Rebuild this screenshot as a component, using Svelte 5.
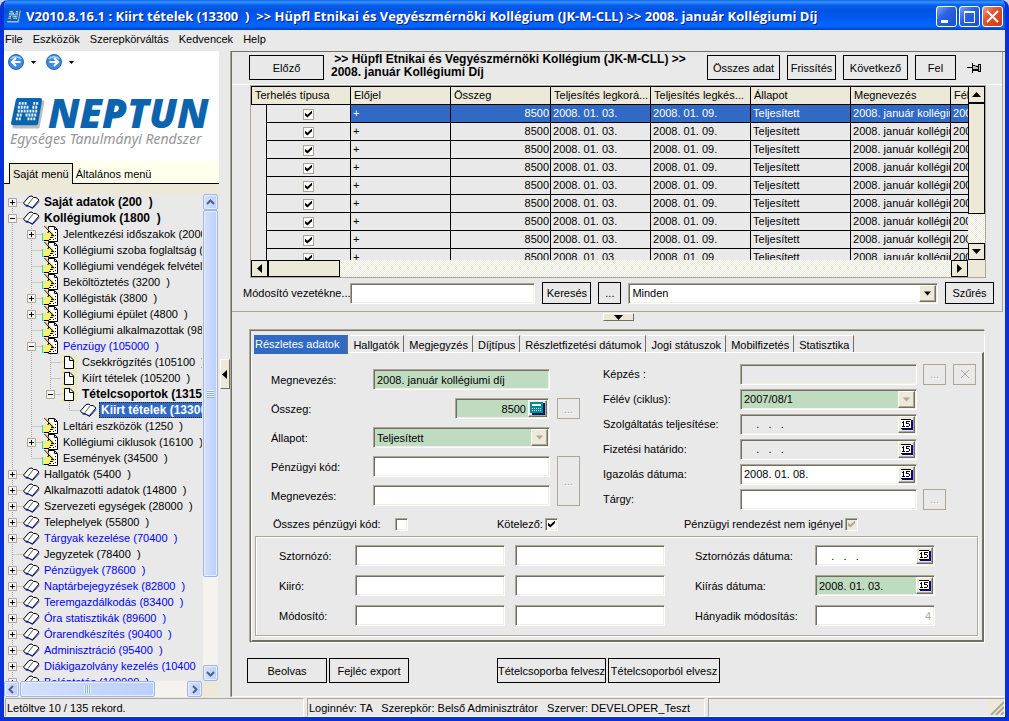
<script lang="ts">
    type Node = {
        level: number;
        label: string;
        icon: "book" | "form" | "page";
        toggle?: "+" | "-";
        tone?: "bold" | "blue" | "selected";
    };

    const menus = ["File", "Eszközök", "Szerepkörváltás", "Kedvencek", "Help"];

    const nodes: Node[] = [
        { level: 0, label: "Saját adatok (200  )", icon: "book", toggle: "+", tone: "bold" },
        { level: 0, label: "Kollégiumok (1800  )", icon: "book", toggle: "-", tone: "bold" },
        { level: 1, label: "Jelentkezési időszakok (2000  )", icon: "form", toggle: "+" },
        { level: 1, label: "Kollégiumi szoba foglaltság (3000  )", icon: "form" },
        { level: 1, label: "Kollégiumi vendégek felvétele (3100  )", icon: "form" },
        { level: 1, label: "Beköltöztetés (3200  )", icon: "form" },
        { level: 1, label: "Kollégisták (3800  )", icon: "form", toggle: "+" },
        { level: 1, label: "Kollégiumi épület (4800  )", icon: "form", toggle: "+" },
        { level: 1, label: "Kollégiumi alkalmazottak (98200  )", icon: "form" },
        { level: 1, label: "Pénzügy (105000  )", icon: "form", toggle: "-", tone: "blue" },
        { level: 2, label: "Csekkrögzítés (105100  )", icon: "page" },
        { level: 2, label: "Kiírt tételek (105200  )", icon: "page" },
        { level: 2, label: "Tételcsoportok (13150  )", icon: "page", toggle: "-", tone: "bold" },
        { level: 3, label: "Kiirt tételek (13300  )", icon: "book", tone: "selected" },
        { level: 1, label: "Leltári eszközök (1250  )", icon: "form" },
        { level: 1, label: "Kollégiumi ciklusok (16100  )", icon: "form", toggle: "+" },
        { level: 1, label: "Események (34500  )", icon: "form" },
        { level: 0, label: "Hallgatók (5400  )", icon: "book", toggle: "+" },
        { level: 0, label: "Alkalmazotti adatok (14800  )", icon: "book", toggle: "+" },
        { level: 0, label: "Szervezeti egységek (28000  )", icon: "book", toggle: "+" },
        { level: 0, label: "Telephelyek (55800  )", icon: "book", toggle: "+" },
        { level: 0, label: "Tárgyak kezelése (70400  )", icon: "book", toggle: "+", tone: "blue" },
        { level: 0, label: "Jegyzetek (78400  )", icon: "book" },
        { level: 0, label: "Pénzügyek (78600  )", icon: "book", toggle: "+", tone: "blue" },
        { level: 0, label: "Naptárbejegyzések (82800  )", icon: "book", toggle: "+", tone: "blue" },
        { level: 0, label: "Teremgazdálkodás (83400  )", icon: "book", toggle: "+", tone: "blue" },
        { level: 0, label: "Óra statisztikák (89600  )", icon: "book", toggle: "+", tone: "blue" },
        { level: 0, label: "Órarendkészítés (90400  )", icon: "book", toggle: "+", tone: "blue" },
        { level: 0, label: "Adminisztráció (95400  )", icon: "book", toggle: "+", tone: "blue" },
        { level: 0, label: "Diákigazolvány kezelés (10400  )", icon: "book", toggle: "+", tone: "blue" },
        { level: 0, label: "Beléptetés (100000  )", icon: "book", toggle: "+", tone: "blue" },
    ];

    const columns = [
        "Előjel",
        "Összeg",
        "Teljesítés legkorá...",
        "Teljesítés legkés...",
        "Állapot",
        "Megnevezés",
        "Félév",
    ];
    const rows = Array.from({ length: 9 }, () => [
        "+",
        "8500",
        "2008. 01. 03.",
        "2008. 01. 09.",
        "Teljesített",
        "2008. január kollégiumi díj",
        "2007/08/1",
    ]);

    const tabs = [
        "Részletes adatok",
        "Hallgatók",
        "Megjegyzés",
        "Díjtípus",
        "Részletfizetési dátumok",
        "Jogi státuszok",
        "Mobilfizetés",
        "Statisztika",
    ];
    let activeTab = $state(0);
    let selectedRow = $state(0);

    const emptyDate = "    .   .   .";

    // does a sibling of the given level follow below row i
    function continues(i: number, level: number) {
        for (let j = i + 1; j < nodes.length; j++) {
            if (nodes[j].level < level) return false;
            if (nodes[j].level === level) return true;
        }
        return level === 0;
    }
</script>

{#snippet chevron(dir: string)}
    <svg class="chevron {dir}" viewBox="0 0 9 9" width="9" height="9">
        <path d="M1 6L4.500 2.500L8 6" fill="none" stroke="#4d6185" stroke-width="2" />
    </svg>
{/snippet}

{#snippet triangle(dir: string)}
    <svg class="triangle {dir}" viewBox="0 0 9 9" width="9" height="9">
        <path d="M0 7L4.500 2L9 7Z" fill="currentColor" />
    </svg>
{/snippet}

{#snippet mark()}
    <svg viewBox="0 0 36 32" class="mark">
        <path d="M10 4H34L29 30H4Z" fill="#b9bcc0" stroke="#b9bcc0" stroke-width="3" stroke-linejoin="round" />
        <path d="M8 2H31L27 26H3Z" fill="#0b64ad" stroke="#0b64ad" stroke-width="4" stroke-linejoin="round" />
        <path
            d="M9 5.500H18M24 5.500H30M8 9.500H20M23 9.500H29M8 13.500H29M7 17.500H13M16 17.500H28M6 21.500H12M18 21.500H27"
            stroke="#e4f1fb" stroke-width="3" stroke-dasharray="2 1" fill="none"
        />
    </svg>
{/snippet}

{#snippet dateField(id: string, value: string, tone: string)}
    <span class="field {tone}">
        <input {id} type="text" {value} />
        <button class="addon" aria-label="Naptár">
            <svg viewBox="0 0 13 13" width="13" height="13">
                <path d="M2 2H13V12H2Z" fill="#00009c" />
                <path d="M1 1H11V11H1Z" fill="#fff" />
                <path d="M1 1H11V2H1ZM1 10H11V11H1Z" fill="#000" />
                <path d="M2 4H3V3H4V8H5V9H2V8H3V5H2ZM6 3H10V4H7V5H9V6H10V8H9V9H6V8H9V6H6Z" fill="#000" />
            </svg>
        </button>
    </span>
{/snippet}

<div class="window">
    <header class="titlebar">
        {@render mark()}
        <h1>V2010.8.16.1 : Kiirt tételek (13300  )  &gt;&gt; Hüpfl Etnikai és Vegyészmérnöki Kollégium (JK-M-CLL) &gt;&gt; 2008. január Kollégiumi Díj</h1>
        <button class="sys" aria-label="Kis méret">
            <svg viewBox="0 0 21 21"><path d="M5 14H12V17H5Z" fill="#fff" /></svg>
        </button>
        <button class="sys" aria-label="Teljes méret">
            <svg viewBox="0 0 21 21"><path d="M5 5.500H16M5.500 5V16.500H15.500V5M5 6.500H16" fill="none" stroke="#fff" /></svg>
        </button>
        <button class="sys close" aria-label="Bezárás">
            <svg viewBox="0 0 21 21"><path d="M5 5L16 16M16 5L5 16" stroke="#fff" stroke-width="2" /></svg>
        </button>
    </header>

    <nav class="menubar">
        {#each menus as menu}
            <button>{menu}</button>
        {/each}
    </nav>

    <div class="main">
        <aside class="sidebar">
            <div class="brand">
                <div class="history">
                    {#each ["back", "forward"] as dir}
                        <button class="round {dir}" aria-label={dir === "back" ? "Vissza" : "Előre"}>
                            <svg viewBox="0 0 16 16" width="16" height="16">
                                <circle cx="8" cy="8" r="7.500" fill="#3f8be0" stroke="#2a62b8" />
                                <path d="M3 5A6 5 0 0 1 13 5" fill="none" stroke="#9cc8f5" stroke-width="2" />
                                <path d="M12.500 8H4.500M8 4L4 8L8 12" fill="none" stroke="#fff" stroke-width="2" />
                            </svg>
                        </button>
                        <button class="drop" aria-label="Előzmények">
                            <svg viewBox="0 0 5 3" width="5" height="3"><path d="M0 0H5L2.500 3Z" /></svg>
                        </button>
                    {/each}
                </div>
                <div class="logo">
                    {@render mark()}
                    <strong>NEPTUN</strong>
                </div>
                <p>Egységes Tanulmányi Rendszer</p>
            </div>

            <div class="side-tabs">
                <button class="on">Saját menü</button>
                <button>Általános menü</button>
            </div>

            <div class="tree-area">
                <ul class="tree">
                    {#each nodes as node, i}
                        <li>
                            {#each { length: node.level } as _, k}
                                <svg class="guide" viewBox="0 0 19 16">
                                    {#if continues(i, k)}<path d="M8.500 0V16" />{/if}
                                </svg>
                            {/each}
                            <svg class="guide" viewBox="0 0 19 16">
                                <path d="M8.500 8.500H19" />
                                {#if i > 0}<path d="M8.500 0V8" />{/if}
                                {#if continues(i, node.level)}<path d="M8.500 8V16" />{/if}
                                {#if node.toggle}
                                    <path class="box" d="M4.500 4.500H12.500V12.500H4.500Z" />
                                    <path class="sign" d="M6 8.500H11" />
                                    {#if node.toggle === "+"}<path class="sign" d="M8.500 6V11" />{/if}
                                {/if}
                            </svg>
                            <svg class="icon" viewBox="0 0 17 16">
                                {#if node.icon === "book"}
                                    <path d="M0.500 9L6 2.500L9 2L10.500 3.500L13 3.500L16 6L9.500 13.500L7 13L5 11.500L2 11Z" fill="#fff" stroke="#000" />
                                    <path d="M10 4L5 10.500" fill="none" stroke="#555" />
                                    <path d="M2.500 12L6.500 12.500L9.500 14.500L16 7.500" fill="none" stroke="#1c1cb0" />
                                {:else if node.icon === "form"}
                                    <path d="M6.500 0.500H12.500L15.500 3.500V15.500H6.500Z" fill="#fff" stroke="#000" />
                                    <path d="M12.500 1V3.500H15M13 6.500H14M13 9.500H14M11 13.500H12M13 12.500H14" fill="none" stroke="#000" />
                                    <path d="M0 7H2V15H0Z" fill="#00e5ee" />
                                    <path d="M1 7H5L7 6H9L12 9V10L10 11L9 13L7 14H1Z" fill="#fff06a" />
                                    <path d="M5.500 7L7 5.500M9 9.500H12M8 11.500H11M7 13.500H9M2 14.500H7" fill="none" stroke="#000" />
                                    <path d="M3 0.500L12 10.500" stroke="#000" stroke-width="1" />
                                    <path d="M4 0.500L12 9" stroke="#f0c000" stroke-width="1" />
                                    <path d="M2 0L4 2" stroke="#d02020" stroke-width="1" />
                                {:else}
                                    <path d="M1 1L16 15M16 1L1 15M0 8H17M8 0V16" stroke="#ffee00" stroke-width="1" />
                                    <path d="M3.500 2.500H9L12.500 6V14.500H3.500Z" fill="#fff" stroke="#000" />
                                    <path d="M8.500 3V6.500H12" fill="none" stroke="#000" />
                                {/if}
                            </svg>
                            <button class="node {node.tone ?? ''}">{node.label}</button>
                        </li>
                    {/each}
                </ul>
                <div class="xp-scroll vertical">
                    <button aria-label="Fel">{@render chevron("up")}</button>
                    <div class="thumb"><i></i></div>
                    <div class="track"></div>
                    <button aria-label="Le">{@render chevron("down")}</button>
                </div>
            </div>
            <div class="hscroll-row">
                <div class="xp-scroll horizontal">
                    <button aria-label="Balra">{@render chevron("left")}</button>
                    <div class="thumb"><i></i></div>
                    <div class="track"></div>
                    <button aria-label="Jobbra">{@render chevron("right")}</button>
                </div>
            </div>
        </aside>

        <div class="splitter">
            <button aria-label="Menü elrejtése">{@render triangle("left")}</button>
        </div>

        <main class="content">
            <section class="upper">
                <div class="toolbar">
                    <button class="flat w75">Előző</button>
                    <h2>&nbsp;&gt;&gt; Hüpfl Etnikai és Vegyészmérnöki Kollégium (JK-M-CLL) &gt;&gt; 2008. január Kollégiumi Díj</h2>
                    <button class="flat w73">Összes adat</button>
                    <button class="flat w49">Frissítés</button>
                    <button class="flat w65">Következő</button>
                    <button class="flat w41">Fel</button>
                    <button class="pin" aria-label="Rögzítés">
                        <svg viewBox="0 0 15 10" width="15" height="10">
                            <path d="M6 2H14V8H6Z" fill="#bbb" />
                            <path d="M0 4.500H5M5.500 0V10M6 2.500H8L9 3.500H11M6 7.500H11M6 6.500H11M11.500 1V9M13.500 1V9M11 1.500H14M11 8.500H14" fill="none" stroke="#000" />
                        </svg>
                    </button>
                </div>

                <div class="grid-box">
                    <div class="viewport">
                        <table>
                            <colgroup>
                                <col class="c-indent" />
                                <col class="c-check" />
                                {#each columns as _}<col class="c-data" />{/each}
                            </colgroup>
                            <thead>
                                <tr>
                                    <th colspan="2">Terhelés típusa</th>
                                    {#each columns as column}<th>{column}</th>{/each}
                                </tr>
                            </thead>
                            <tbody>
                                {#each rows as row, r}
                                    <tr class:selected={r === selectedRow} onclick={() => (selectedRow = r)}>
                                        <td class="plain"></td>
                                        <td class="plain check"><input type="checkbox" class="tick small" checked aria-label="Terhelés" /></td>
                                        {#each row as cell, c}
                                            <td class:num={c === 1}>{cell}</td>
                                        {/each}
                                    </tr>
                                {/each}
                            </tbody>
                        </table>
                    </div>
                    <div class="bar vertical">
                        <button aria-label="Fel">{@render triangle("up")}</button>
                        <div class="thumb"></div>
                        <div class="track"></div>
                        <button aria-label="Le">{@render triangle("down")}</button>
                    </div>
                    <div class="bar horizontal">
                        <button aria-label="Balra">{@render triangle("left")}</button>
                        <div class="thumb"></div>
                        <div class="track"></div>
                        <button aria-label="Jobbra">{@render triangle("right")}</button>
                    </div>
                    <div class="corner"></div>
                </div>

                <div class="search">
                    <label for="search">Módosító vezetékne...</label>
                    <span class="field search-text"><input id="search" type="text" /></span>
                    <button class="flat w49">Keresés</button>
                    <button class="flat w23">...</button>
                    <span class="field search-scope">
                        <select aria-label="Szűrő"><option>Minden</option></select>
                        <span class="addon arrow">{@render triangle("down")}</span>
                    </span>
                    <button class="flat w49">Szűrés</button>
                </div>
            </section>

            <div class="h-splitter">
                <button aria-label="Részletek elrejtése">{@render triangle("down")}</button>
            </div>

            <section class="details">
                <div class="tabs" role="tablist">
                    {#each tabs as tab, i}
                        <button role="tab" aria-selected={i === activeTab} class:active={i === activeTab} onclick={() => (activeTab = i)}>{tab}</button>
                    {/each}
                </div>
                <div class="tab-page">
                    <div class="form">
                        <div class="left-fields">
                            <label for="name">Megnevezés:</label>
                            <span class="field green"><input id="name" type="text" value="2008. január kollégiumi díj" /></span>
                            <span></span>

                            <label for="amount">Összeg:</label>
                            <span class="field green amount">
                                <input id="amount" type="text" value="8500" />
                                <button class="addon" aria-label="Számológép">
                                    <svg viewBox="0 0 15 13" width="15" height="13">
                                        <path d="M2 1H15V13H2Z" fill="#001a5c" />
                                        <path d="M0 0H13V11H0Z" fill="#008c96" />
                                        <path d="M2 2H11V4H2Z" fill="#fff" />
                                        <path d="M2 6.500H12M2 8.500H12" stroke="#c5f5f5" stroke-dasharray="1 1" />
                                    </svg>
                                </button>
                            </span>
                            <button class="more" disabled>...</button>

                            <label for="state">Állapot:</label>
                            <span class="field green">
                                <select id="state"><option>Teljesített</option></select>
                                <span class="addon arrow dim">{@render triangle("down")}</span>
                            </span>
                            <span></span>

                            <label for="code">Pénzügyi kód:</label>
                            <span class="field"><input id="code" type="text" /></span>
                            <button class="more tall" disabled>...</button>

                            <label for="code-name">Megnevezés:</label>
                            <span class="field"><input id="code-name" type="text" /></span>
                        </div>

                        <div class="right-fields">
                            <label for="training">Képzés :</label>
                            <span class="field gray"><input id="training" type="text" /></span>
                            <button class="more" disabled>...</button>
                            <button class="more" disabled aria-label="Törlés">
                                <svg viewBox="0 0 10 10" width="10" height="10"><path d="M1 1L9 9M9 1L1 9" stroke="#aca899" /></svg>
                            </button>

                            <label for="term">Félév (ciklus):</label>
                            <span class="field green">
                                <select id="term"><option>2007/08/1</option></select>
                                <span class="addon arrow dim">{@render triangle("down")}</span>
                            </span>

                            <label for="service">Szolgáltatás teljesítése:</label>
                            {@render dateField("service", emptyDate, "gray")}

                            <label for="deadline">Fizetési határido:</label>
                            {@render dateField("deadline", emptyDate, "gray")}

                            <label for="proof">Igazolás dátuma:</label>
                            {@render dateField("proof", "2008. 01. 08.", "")}

                            <label for="subject">Tárgy:</label>
                            <span class="field"><input id="subject" type="text" /></span>
                            <button class="more" disabled>...</button>
                        </div>
                    </div>

                    <div class="flags">
                        <label class="all-codes">Összes pénzügyi kód: <input type="checkbox" class="tick" /></label>
                        <label class="required">Kötelező: <input type="checkbox" class="tick" checked /></label>
                        <label>Pénzügyi rendezést nem igényel <input type="checkbox" class="tick" checked disabled /></label>
                    </div>

                    <div class="audit">
                        <label for="cancelled">Sztornózó:</label>
                        <span class="field"><input id="cancelled" type="text" /></span>
                        <span class="field"><input type="text" aria-label="Sztornózó neve" /></span>
                        <label for="cancel-date">Sztornózás dátuma:</label>
                        {@render dateField("cancel-date", emptyDate, "short")}

                        <label for="issuer">Kiiró:</label>
                        <span class="field"><input id="issuer" type="text" /></span>
                        <span class="field"><input type="text" aria-label="Kiiró neve" /></span>
                        <label for="issue-date">Kiírás dátuma:</label>
                        {@render dateField("issue-date", "2008. 01. 03.", "green short")}

                        <label for="editor">Módosító:</label>
                        <span class="field"><input id="editor" type="text" /></span>
                        <span class="field"><input type="text" aria-label="Módosító neve" /></span>
                        <label for="edits">Hányadik módosítás:</label>
                        <span class="field faded short"><input id="edits" type="text" value="4" /></span>
                    </div>
                </div>
            </section>

            <footer class="actions">
                <button class="flat w80">Beolvas</button>
                <button class="flat w80">Fejléc export</button>
                <button class="flat w109 apart">Tételcsoporba felvesz</button>
                <button class="flat w112">Tételcsoporból elvesz</button>
            </footer>
        </main>
    </div>

    <footer class="status">
        <span class="records">Letöltve 10 / 135 rekord.</span>
        <span class="login">Loginnév: TA   Szerepkör: Belső Adminisztrátor   Szerver: DEVELOPER_Teszt</span>
        <span class="grip">
            <svg viewBox="0 0 16 16" width="16" height="16">
                <path d="M3 16L16 3M8 16L16 8M13 16L16 13" stroke="#aca899" stroke-width="2" />
            </svg>
        </span>
    </footer>
</div>

<style>
    :global(body) {
        margin: 0;
        background: #c9d6ea;
    }
    .window {
        --face: #e9e9e9;
        --beige: #ece9d8;
        --shade: #aca899;
        --dark: #716f64;
        --blue: #316ac5;
        display: flex;
        flex-direction: column;
        box-sizing: border-box;
        height: 100vh;
        border: solid #0831d9;
        border-width: 0 4px 4px;
        border-radius: 8px 8px 0 0;
        background: var(--face);
        font-family: "Liberation Sans", Arial, sans-serif;
        font-size: 11px;
        line-height: 14px;
        color: #000;
        overflow: hidden;
    }
    button,
    input,
    select {
        box-sizing: border-box;
        margin: 0;
        padding: 0;
        border: 0;
        border-radius: 0;
        background: none;
        font: inherit;
        color: inherit;
        white-space: pre;
    }
    input,
    select {
        appearance: none;
        outline: none;
    }
    svg {
        display: block;
        flex: none;
    }

    .titlebar {
        display: flex;
        align-items: center;
        gap: 2px;
        flex: none;
        height: 30px;
        padding: 2px 2px 0;
        box-sizing: border-box;
        background: linear-gradient(#0a5de8 0, #3a93ff 2px, #0562ee 5px, #0053e0 10px, #0059ee 18px, #0066ff 25px, #0060f5 27px, #003dc0 30px);
    }
    .titlebar .mark {
        width: 15px;
        height: 14px;
    }
    h1 {
        flex: 1;
        margin: 0 0 0 3px;
        overflow: hidden;
        font-family: "Open Sans", "Noto Sans", sans-serif;
        font-size: 13px;
        line-height: 18px;
        font-weight: 700;
        color: #fff;
        white-space: pre;
        text-shadow: 1px 1px #0a1e8a;
    }
    .sys {
        width: 21px;
        height: 21px;
        border: 1px solid #fff;
        border-radius: 3px;
        background: linear-gradient(135deg, #7fa4f5, #2a62e6 40%, #1c4fd0);
    }
    .sys svg {
        margin: -1px;
        width: 21px;
        height: 21px;
    }
    .sys.close {
        background: linear-gradient(135deg, #f0a088, #e0532c 40%, #c83c16);
    }

    .menubar {
        display: flex;
        flex: none;
        gap: 10px;
        height: 21px;
        padding: 0 1px 3px;
        box-sizing: border-box;
    }

    .main {
        display: flex;
        flex: 1;
        min-height: 0;
    }
    .sidebar {
        display: flex;
        flex-direction: column;
        width: 215px;
        flex: none;
    }
    .brand {
        flex: none;
        height: 110px;
        padding: 3px 4px 0;
        box-sizing: border-box;
        background: #fff;
    }
    .history {
        display: flex;
        align-items: center;
    }
    .drop {
        padding: 0 9px 0 7px;
        margin-right: 1px;
    }
    .forward svg {
        transform: scaleX(-1);
    }
    .logo {
        display: flex;
        align-items: center;
        height: 32px;
        margin-top: 27px;
        padding-left: 2px;
    }
    .logo .mark {
        width: 35px;
        height: 31px;
    }
    .logo strong {
        font-family: "Open Sans", sans-serif;
        font-size: 40px;
        line-height: 32px;
        font-style: italic;
        font-weight: 800;
        color: #0b64ad;
        padding-left: 3px;
    }
    .brand p {
        margin: 0;
        padding-left: 2px;
        font-family: "Noto Sans", sans-serif;
        font-size: 14px;
        line-height: 20px;
        font-style: italic;
        color: #949698;
        white-space: nowrap;
    }
    .side-tabs {
        display: flex;
        align-items: end;
        flex: none;
        height: 22px;
        padding-left: 5px;
        background: #ffffec;
        border-bottom: 1px solid #000;
    }
    .side-tabs button {
        height: 19px;
        padding: 0 3px;
    }
    .side-tabs .on {
        height: 21px;
        margin-bottom: -1px;
        border: 1px solid #000;
        border-bottom: 0;
        background: var(--beige);
    }

    .tree-area {
        display: flex;
        flex: 1;
        min-height: 0;
        border-top: 10px solid var(--beige);
    }
    .tree {
        flex: 1;
        min-width: 0;
        margin: 0 1px 0 0;
        padding: 0;
        overflow: hidden;
        list-style: none;
    }
    .tree li {
        display: flex;
        height: 16px;
    }
    .guide {
        width: 19px;
        height: 16px;
    }
    .guide path {
        fill: none;
        stroke: #aca899;
        stroke-dasharray: 1 1;
    }
    .guide .box {
        fill: #f4f4f4;
        stroke-dasharray: none;
    }
    .guide .sign {
        stroke: #000;
        stroke-dasharray: none;
    }
    .icon {
        width: 17px;
        height: 16px;
        margin-right: 2px;
    }
    .node {
        padding: 0 2px;
        line-height: 16px;
    }
    .node.bold,
    .node.selected {
        font-size: 12px;
        font-weight: 700;
    }
    .node.blue {
        color: #0000ff;
    }
    .node.selected {
        background: var(--blue);
        color: #fff;
        outline: 1px dotted #222;
        outline-offset: -1px;
    }

    .xp-scroll {
        display: flex;
        background: #f4f3ee;
    }
    .xp-scroll.vertical {
        flex-direction: column;
        width: 15px;
        margin-right: 1px;
    }
    .xp-scroll.horizontal {
        flex: 1;
    }
    .xp-scroll button,
    .xp-scroll .thumb {
        display: flex;
        align-items: center;
        justify-content: center;
        border: 1px solid #9fb5e8;
        border-radius: 2px;
        background: linear-gradient(90deg, #d3e0fe, #bccffb);
        box-shadow: inset 0 0 0 1px #e6eefe;
    }
    .xp-scroll button {
        flex: none;
        width: 15px;
        height: 16px;
    }
    .vertical .track {
        flex: 88;
    }
    .xp-scroll.vertical .thumb {
        flex: 367;
    }
    .xp-scroll.horizontal .thumb {
        flex: 134;
        margin-left: 1px;
    }
    .xp-scroll.horizontal .track {
        flex: 32;
    }
    .thumb i {
        width: 7px;
        height: 8px;
        background: repeating-linear-gradient(#eef4fe 0 1px, #8cb0f8 1px 2px);
    }
    .horizontal .thumb i {
        background: repeating-linear-gradient(90deg, #eef4fe 0 1px, #8cb0f8 1px 2px);
    }
    .hscroll-row {
        display: flex;
        flex: none;
        height: 16px;
        padding-right: 17px;
        background: var(--beige);
    }
    .right {
        transform: rotate(90deg);
    }
    .down {
        transform: rotate(180deg);
    }
    .left {
        transform: rotate(-90deg);
    }

    .splitter {
        display: flex;
        align-items: center;
        width: 12px;
        flex: none;
    }
    .splitter button {
        width: 10px;
        height: 30px;
        margin-left: 1px;
        border: 1px solid;
        border-color: #fff var(--dark) var(--dark) #fff;
        background: var(--beige);
    }

    .content {
        flex: 1;
        min-width: 0;
        border-left: 1px solid var(--dark);
        box-shadow: -1px 0 var(--shade);
        border-top: 1px solid var(--dark);
        border-bottom: 1px solid #fff;
    }
    .upper {
        border: solid var(--shade);
        border-width: 0 1px 1px 0;
        margin-right: 2px;
        padding-bottom: 7px;
    }
    .toolbar {
        display: flex;
        align-items: start;
        gap: 7px;
        padding: 3px 20px 4px 17px;
        border-bottom: 1px solid #fff;
    }
    h2 {
        flex: 1;
        margin: -2px 0 0;
        font-size: 12px;
        line-height: 13px;
        font-weight: 700;
    }
    .flat {
        flex: none;
        height: 25px;
        border: 1px solid #000;
        text-align: center;
        overflow: hidden;
    }
    .w23 { width: 23px; }
    .w41 { width: 41px; }
    .w49 { width: 49px; }
    .w65 { width: 65px; }
    .w73 { width: 73px; }
    .w75 { width: 75px; }
    .w80 { width: 80px; }
    .w109 { width: 109px; }
    .w112 { width: 112px; }
    .pin {
        align-self: center;
        padding-left: 4px;
    }

    .grid-box {
        display: grid;
        grid-template-columns: minmax(0, 1fr) 17px;
        grid-template-rows: 174px 17px;
        margin: 0 16px 0 18px;
        border: 1px solid var(--shade);
    }
    .viewport {
        overflow: hidden;
    }
    table {
        width: 800px;
        table-layout: fixed;
        border-collapse: separate;
        border-spacing: 0;
    }
    .c-indent { width: 16px; }
    .c-check { width: 84px; }
    .c-data { width: 100px; }
    th,
    td {
        box-sizing: border-box;
        height: 18px;
        padding: 0 0 0 2px;
        border: solid #000;
        border-width: 0 1px 1px 0;
        line-height: 17px;
        text-align: left;
        font-weight: 400;
        white-space: nowrap;
        overflow: hidden;
    }
    th {
        height: 19px;
        padding-left: 3px;
        border-top-width: 1px;
        background: var(--beige);
    }
    th:first-child {
        border-left-width: 1px;
    }
    td:first-child {
        border-bottom: 0;
    }
    td.num {
        padding-right: 1px;
        text-align: right;
    }
    td.check {
        padding: 0;
        text-align: center;
    }
    .selected td:not(.plain) {
        background: var(--blue);
        color: #fff;
    }
    .bar {
        display: flex;
        background: repeating-conic-gradient(#fff 0 25%, var(--beige) 0 50%) 0 0 / 2px 2px;
    }
    .bar.vertical {
        flex-direction: column;
    }
    .bar button,
    .bar .thumb {
        display: flex;
        align-items: center;
        justify-content: center;
        box-sizing: border-box;
        border: 1px solid #000;
        background: var(--beige);
    }
    .bar button {
        flex: none;
        width: 17px;
        height: 17px;
    }
    .bar.vertical .thumb {
        flex: 111;
    }
    .bar.vertical .track {
        flex: 29;
    }
    .bar.horizontal .thumb {
        flex: 70;
    }
    .bar.horizontal .track {
        flex: 613;
    }
    .corner {
        background: var(--beige);
    }

    .tick {
        display: inline-flex;
        align-items: center;
        justify-content: center;
        flex: none;
        width: 13px;
        height: 13px;
        border: 1px solid;
        border-color: var(--shade) #fff #fff var(--shade);
        background: #fff;
        box-shadow: inset 1px 1px var(--dark), inset -1px -1px #f1efe2;
        vertical-align: middle;
    }
    .tick.small {
        width: 11px;
        height: 11px;
        border-color: var(--shade);
        box-shadow: none;
    }
    .tick:checked::before {
        content: "";
        width: 7px;
        height: 7px;
        background: #000;
        clip-path: polygon(0 30%, 35% 60%, 100% 0, 100% 38%, 35% 100%, 0 70%);
    }
    .tick:disabled {
        background: var(--beige);
    }
    .tick:disabled::before {
        background: var(--shade);
    }

    .search {
        display: flex;
        align-items: center;
        gap: 7px;
        padding: 4px 8px 0 11px;
    }
    .search label {
        width: 107px;
        margin-right: -7px;
        white-space: nowrap;
    }
    .search .flat {
        height: 22px;
    }
    .search-text {
        flex: 184;
    }
    .search-scope {
        flex: 310;
    }

    .field {
        display: flex;
        box-sizing: border-box;
        min-width: 0;
        height: 21px;
        padding: 1px;
        border: 1px solid;
        border-color: var(--shade) #fff #fff var(--shade);
        background: #fff;
        box-shadow: inset 1px 1px var(--dark), inset -1px -1px #f1efe2;
    }
    .field input,
    .field select {
        flex: 1;
        width: 0;
        min-width: 0;
        padding: 0 2px;
    }
    .green {
        background: #c0dcc0;
    }
    .gray {
        background: var(--face);
    }
    .addon {
        display: flex;
        align-items: center;
        justify-content: center;
        flex: none;
        width: 17px;
        box-sizing: border-box;
        border: 1px solid;
        border-color: #fff var(--dark) var(--dark) #fff;
        background: var(--beige);
        box-shadow: inset -1px -1px var(--shade);
    }
    .dim {
        color: var(--shade);
    }
    .arrow .triangle {
        width: 7px;
        height: 7px;
    }

    .h-splitter {
        display: flex;
        justify-content: center;
        height: 18px;
        padding-top: 1px;
        box-sizing: border-box;
    }
    .h-splitter button {
        display: flex;
        align-items: center;
        justify-content: center;
        width: 31px;
        height: 8px;
        border: 1px solid;
        border-color: #fff var(--dark) var(--dark) #fff;
        background: var(--beige);
    }
    .splitter .triangle,
    .h-splitter .triangle {
        margin: 0 -1px;
    }

    .details {
        margin: 0 20px 0 18px;
        border: 1px solid;
        border-color: var(--dark) #fff #fff var(--dark);
        box-shadow: -1px -1px var(--shade);
    }
    .tabs {
        display: flex;
        height: 21px;
        padding: 4px 0 0 3px;
        box-sizing: border-box;
    }
    .tabs button {
        height: 17px;
        padding: 2px 4px 0 3px;
        margin-right: 2px;
        border: solid;
        border-width: 1px 1px 0 0;
        border-color: #fff var(--dark) #fff #fff;
    }
    .tabs .active {
        height: 19px;
        padding: 0 8px 2px 1px;
        background: var(--blue);
        border-top: 0;
        color: #fff;
    }
    .tab-page {
        padding: 11px 4px 4px 3px;
        border: solid;
        border-width: 1px 2px 2px 1px;
        border-color: #fff var(--dark) var(--dark) #fff;
    }
    .form {
        display: flex;
        gap: 23px;
        padding-left: 16px;
    }
    .left-fields,
    .right-fields {
        display: grid;
        align-items: center;
    }
    .left-fields {
        grid-template-columns: 102px 184px 23px;
        grid-template-rows: repeat(5, 21px);
        row-gap: 8px;
        align-content: start;
        padding-top: 5px;
    }
    .left-fields .field {
        width: 177px;
    }
    .left-fields .amount {
        justify-self: end;
        width: 94px;
        margin-right: 8px;
    }
    .amount input,
    .faded input {
        text-align: right;
    }
    .amount .addon {
        width: 19px;
    }
    .right-fields {
        grid-template-columns: 137px 183px 30px 23px;
        grid-template-rows: repeat(6, 20px);
        row-gap: 5px;
    }
    .right-fields label {
        grid-column: 1;
    }
    .right-fields .field {
        width: 177px;
    }
    .more {
        width: 23px;
        height: 21px;
        border: 1px solid var(--shade);
        color: var(--shade);
        text-shadow: 1px 1px #fff;
    }
    .more svg {
        margin: 0 auto;
    }
    .more.tall {
        grid-row: span 2;
        height: 50px;
    }
    .faded {
        color: var(--shade);
    }

    .flags {
        display: flex;
        padding: 8px 0 5px 18px;
    }
    .flags label {
        display: flex;
        align-items: center;
        gap: 2px;
        white-space: nowrap;
    }
    .flags .all-codes {
        justify-content: space-between;
        width: 135px;
        margin-right: 89px;
    }
    .flags .required {
        width: 60px;
        margin-right: 127px;
    }

    .audit {
        display: grid;
        grid-template-columns: 76px 160px 180px 120px 120px;
        grid-auto-rows: 21px;
        align-items: center;
        row-gap: 9px;
        padding: 8px 0 9px 23px;
        border: 1px solid var(--shade);
        box-shadow: inset 1px 1px #fff, 1px 1px #fff;
    }
    .audit .field {
        width: 150px;
    }
    .audit :global(.short) {
        width: 120px;
    }

    .actions {
        display: flex;
        gap: 2px;
        padding: 15px 15px 0;
    }
    .apart {
        margin-left: 86px;
    }

    .status {
        display: flex;
        flex: none;
        gap: 3px;
        padding: 1px 0 0 1px;
        height: 20px;
        box-sizing: border-box;
    }
    .status span {
        box-sizing: border-box;
        padding: 2px 1px 0;
        border: 1px solid;
        border-color: var(--shade) #fff #fff var(--shade);
        white-space: pre;
        overflow: hidden;
    }
    .records,
    .grip {
        flex: 298;
    }
    .login {
        flex: 398;
    }
    .status .grip {
        display: flex;
        justify-content: end;
        padding: 0;
    }
    .grip svg {
        background: var(--beige);
    }
</style>
